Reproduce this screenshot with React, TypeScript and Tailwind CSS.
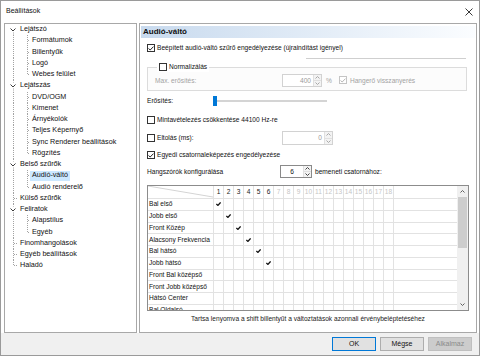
import React from "react";

type TreeNode = {
  label: string;
  level: 0 | 1;
  expanded?: boolean;
  last?: boolean;
  selected?: boolean;
};

const tree: TreeNode[] = [
  { label: "Lejátszó", level: 0, expanded: true },
  { label: "Formátumok", level: 1 },
  { label: "Billentyűk", level: 1 },
  { label: "Logó", level: 1 },
  { label: "Webes felület", level: 1, last: true },
  { label: "Lejátszás", level: 0, expanded: true },
  { label: "DVD/OGM", level: 1 },
  { label: "Kimenet", level: 1 },
  { label: "Árnyékolók", level: 1 },
  { label: "Teljes Képernyő", level: 1 },
  { label: "Sync Renderer beállítások", level: 1 },
  { label: "Rögzítés", level: 1, last: true },
  { label: "Belső szűrők", level: 0, expanded: true },
  { label: "Audió-váltó", level: 1, selected: true },
  { label: "Audió renderelő", level: 1, last: true },
  { label: "Külső szűrők", level: 0 },
  { label: "Feliratok", level: 0, expanded: true },
  { label: "Alapstílus", level: 1 },
  { label: "Egyéb", level: 1, last: true },
  { label: "Finomhangolások", level: 0 },
  { label: "Egyéb beállítások", level: 0 },
  { label: "Haladó", level: 0, last: true },
];

const speakers = [
  "Bal első",
  "Jobb első",
  "Front Közép",
  "Alacsony Frekvencia",
  "Bal hátsó",
  "Jobb hátsó",
  "Front Bal középső",
  "Front Jobb középső",
  "Hátsó Center",
  "Bal Oldalsó",
];

const ROW_H = 11.25;
const DOT = { stroke: "#a3a3a3", strokeWidth: 1, strokeDasharray: "1 1" };

function Gutter({ node, first }: { node: TreeNode; first: boolean }) {
  const mid = 5.5;
  if (node.level === 0) {
    return (
      <svg width={13} height={ROW_H} className="shrink-0">
        {node.expanded ? (
          <>
            {!first && <line x1={8.5} y1={0} x2={8.5} y2={mid - 3} {...DOT} />}
            <line x1={8.5} y1={mid + 3} x2={8.5} y2={ROW_H} {...DOT} />
            <polyline points={`5.5,${mid - 1} 8,${mid + 1.5} 10.5,${mid - 1}`} fill="none" stroke="#3c3c3c" strokeWidth={1} />
          </>
        ) : (
          <>
            <line x1={8.5} y1={0} x2={8.5} y2={node.last ? mid : ROW_H} {...DOT} />
            <line x1={9} y1={mid} x2={13} y2={mid} {...DOT} />
          </>
        )}
      </svg>
    );
  }
  return (
    <svg width={25} height={ROW_H} className="shrink-0">
      <line x1={8.5} y1={0} x2={8.5} y2={ROW_H} {...DOT} />
      <line x1={22.5} y1={0} x2={22.5} y2={node.last ? mid : ROW_H} {...DOT} />
      <line x1={23} y1={mid} x2={25} y2={mid} {...DOT} />
    </svg>
  );
}

function CheckBox({ checked, disabled }: { checked?: boolean; disabled?: boolean }) {
  return (
    <span
      className={`w-[8px] h-[8px] shrink-0 border bg-white flex items-center justify-center ${
        disabled ? "border-[#c4c4c4]" : "border-[#333333]"
      }`}
    >
      {checked && (
        <svg width={6} height={5} viewBox="0 0 6 5">
          <path d="M0.5 2.5 L2.2 4 L5.5 0.6" fill="none" stroke={disabled ? "#b5b5b5" : "#222"} strokeWidth={1} />
        </svg>
      )}
    </span>
  );
}

function Arrow({ up, color = "#555" }: { up?: boolean; color?: string }) {
  return (
    <svg width={5} height={3} viewBox="0 0 5 3">
      <polyline points={up ? "0.5,2.5 2.5,0.5 4.5,2.5" : "0.5,0.5 2.5,2.5 4.5,0.5"} fill="none" stroke={color} strokeWidth={1} />
    </svg>
  );
}

function Spin({
  value,
  width,
  disabled,
  center,
}: {
  value: string;
  width: string;
  disabled?: boolean;
  center?: boolean;
}) {
  return (
    <div
      className={`${width} h-full flex border ${
        disabled ? "border-[#d2d2d2] text-[#9a9a9a]" : "border-[#8a8a8a] text-[#111]"
      } bg-white`}
    >
      <span className={`flex-1 flex items-center ${center ? "justify-center" : "justify-end pr-[2px]"}`}>{value}</span>
      <div className="w-[8px] flex flex-col border-l border-[#e0e0e0] bg-[#f3f3f3]">
        <div className="flex-1 flex items-center justify-center border-b border-[#e0e0e0]">
          <Arrow up color={disabled ? "#a8a8a8" : "#444"} />
        </div>
        <div className="flex-1 flex items-center justify-center">
          <Arrow color={disabled ? "#a8a8a8" : "#444"} />
        </div>
      </div>
    </div>
  );
}

function Check() {
  return (
    <svg width={5} height={4} viewBox="0 0 5 4">
      <path d="M0.4 1.9 L1.9 3.4 L4.6 0.4" fill="none" stroke="#111" strokeWidth={1.3} />
    </svg>
  );
}

function ChannelGrid() {
  const cols = Array.from({ length: 18 }, (_, i) => i + 1);
  return (
    <div className="ml-[7px] mt-[7px] w-[322px] h-[126px] border border-[#8c8c8c] flex shrink-0">
      <div className="flex-1 overflow-hidden bg-white">
        <div className="flex h-[13px] border-b border-[#e2e2e2]">
          <div className="w-[66px] border-r border-[#e2e2e2]">
            <svg width={65} height={12}>
              <line x1={0} y1={0} x2={65} y2={11} stroke="#d4d4d4" strokeWidth={1} />
            </svg>
          </div>
          {cols.map((c) => (
            <div
              key={c}
              className={`w-[10px] border-r border-[#e2e2e2] flex items-center justify-center ${
                c <= 6 ? "text-[#222]" : "text-[#c6c6c6]"
              }`}
            >
              {c}
            </div>
          ))}
        </div>
        {speakers.map((s, r) => (
          <div key={s} className="flex h-[11.75px] border-b border-[#e2e2e2]">
            <div className="w-[66px] border-r border-[#e2e2e2] flex items-center pl-[1px] whitespace-nowrap">{s}</div>
            {cols.map((c) => (
              <div key={c} className="w-[10px] border-r border-[#e2e2e2] flex items-center justify-center">
                {c === r + 1 && r < 6 && <Check />}
              </div>
            ))}
          </div>
        ))}
      </div>
      <div className="w-[11px] bg-[#f0f0f0] flex flex-col">
        <div className="h-[11px] flex items-center justify-center">
          <Arrow up color="#606060" />
        </div>
        <div className="h-[51px] mx-[1px] bg-[#cdcdcd]" />
        <div className="flex-1" />
        <div className="h-[11px] flex items-center justify-center">
          <Arrow color="#606060" />
        </div>
      </div>
    </div>
  );
}

function Button({ label, primary, disabled }: { label: string; primary?: boolean; disabled?: boolean }) {
  return (
    <div
      className={`w-[44px] h-[14px] flex items-center justify-center border text-[7px] ${
        primary
          ? "border-[#0078d7] bg-[#e1e1e1] text-[#111]"
          : disabled
          ? "border-[#bfbfbf] bg-[#cccccc] text-[#8a8a8a]"
          : "border-[#adadad] bg-[#e1e1e1] text-[#111]"
      }`}
    >
      {label}
    </div>
  );
}

export default function App() {
  return (
    <div className="w-[480px] h-[356px] border border-[#9a9a9a] bg-white flex flex-col font-['Liberation_Sans',Arial,sans-serif] text-[#111] overflow-hidden">
      {/* title bar */}
      <div className="h-[21px] shrink-0 flex items-center justify-between pl-[5px] pr-[5px]">
        <span className="text-[7px]">Beállítások</span>
        <svg width={8} height={8} viewBox="0 0 8 8" className="mr-[1px]">
          <path d="M0.5 0.5 L7.5 7.5 M7.5 0.5 L0.5 7.5" stroke="#222" strokeWidth={0.9} />
        </svg>
      </div>

      {/* body */}
      <div className="h-[311px] shrink-0 flex pt-[1px] pl-[3px] pr-[2px] gap-[2px]">
        {/* tree */}
        <div className="w-[133px] h-[310px] border border-[#a8a8a8] bg-white text-[7.2px] flex flex-col">
          {tree.map((n, i) => (
            <div key={n.label + i} className="h-[11.25px] flex items-center shrink-0">
              <Gutter node={n} first={i === 0} />
              <span
                className={`h-[10px] flex items-center px-[2px] whitespace-nowrap ${
                  n.selected ? "bg-[#cce8ff]" : ""
                }`}
              >
                {n.label}
              </span>
            </div>
          ))}
        </div>

        {/* settings page */}
        <div className="flex-1 h-[310px] border border-[#a8a8a8] bg-white flex flex-col text-[6.6px]">
          <div className="mt-[2px] mx-[1px] h-[12px] shrink-0 flex items-center pl-[2px] text-[8px] font-bold bg-gradient-to-r from-[#c8daee] to-[#fbfdff]">
            Audió-váltó
          </div>

          <div className="mt-[4px] h-[12px] shrink-0 flex items-center pl-[7px] gap-[2px]">
            <CheckBox checked />
            <span>Beépített audió-váltó szűrő engedélyezése (újraindítást igényel)</span>
          </div>

          <div className="mt-[4px] h-px shrink-0 self-end mr-[10px] w-[160px] bg-[#cfcfcf]" />

          <fieldset className="mt-[3px] ml-[7px] w-[320px] shrink-0 border border-[#dcdcdc] px-[7px] pb-[3px] bg-[#fcfcfc]">
            <legend className="ml-[2px] px-[2px] h-[10px] bg-white">
              <span className="flex items-center h-[10px] gap-[2px]">
                <CheckBox />
                <span>Normalizálás</span>
              </span>
            </legend>
            <div className="mt-[2px] h-[13px] flex items-center text-[#a2a2a2]">
              <span className="w-[127px]">Max. erősítés:</span>
              <Spin value="400" width="w-[40px]" disabled />
              <span className="ml-[4px]">%</span>
              <span className="ml-[7px] flex items-center gap-[3px]">
                <CheckBox checked disabled />
                <span>Hangerő visszanyerés</span>
              </span>
            </div>
          </fieldset>

          <div className="mt-[4px] h-[12px] shrink-0 flex items-center pl-[7px]">
            <span className="w-[66px]">Erősítés:</span>
            <div className="w-[114px] h-[10px] flex items-center">
              <div className="w-[4px] h-[10px] bg-[#0078d7] shrink-0" />
              <div className="flex-1 h-[2px] bg-[#d4d4d4]" />
            </div>
          </div>

          <div className="mt-[7px] h-[12px] shrink-0 flex items-center pl-[7px] gap-[2px]">
            <CheckBox />
            <span>Mintavételezés csökkentése 44100 Hz-re</span>
          </div>

          <div className="mt-[5px] h-[14px] shrink-0 flex items-center pl-[7px]">
            <span className="w-[135px] flex items-center gap-[2px]">
              <CheckBox />
              <span>Eltolás (ms):</span>
            </span>
            <Spin value="0" width="w-[51px]" disabled />
          </div>

          <div className="mt-[4px] h-[12px] shrink-0 flex items-center pl-[7px] gap-[2px]">
            <CheckBox checked />
            <span>Egyedi csatornaleképezés engedélyezése</span>
          </div>

          <div className="mt-[4px] h-[13px] shrink-0 flex items-center pl-[7px]">
            <span className="w-[133px]">Hangszórók konfigurálása</span>
            <Spin value="6" width="w-[32px]" center />
            <span className="ml-[3px]">bemeneti csatornához:</span>
          </div>

          <ChannelGrid />

          <div className="mt-[3px] h-[10px] shrink-0 flex items-center justify-center text-[#222]">
            Tartsa lenyomva a shift billentyűt a változtatások azonnali érvénybeléptetéséhez
          </div>
        </div>
      </div>

      {/* button bar */}
      <div className="flex-1 bg-[#f0f0f0] flex items-center justify-end gap-[4px] pr-[7px]">
        <Button label="OK" primary />
        <Button label="Mégse" />
        <Button label="Alkalmaz" disabled />
      </div>
    </div>
  );
}
